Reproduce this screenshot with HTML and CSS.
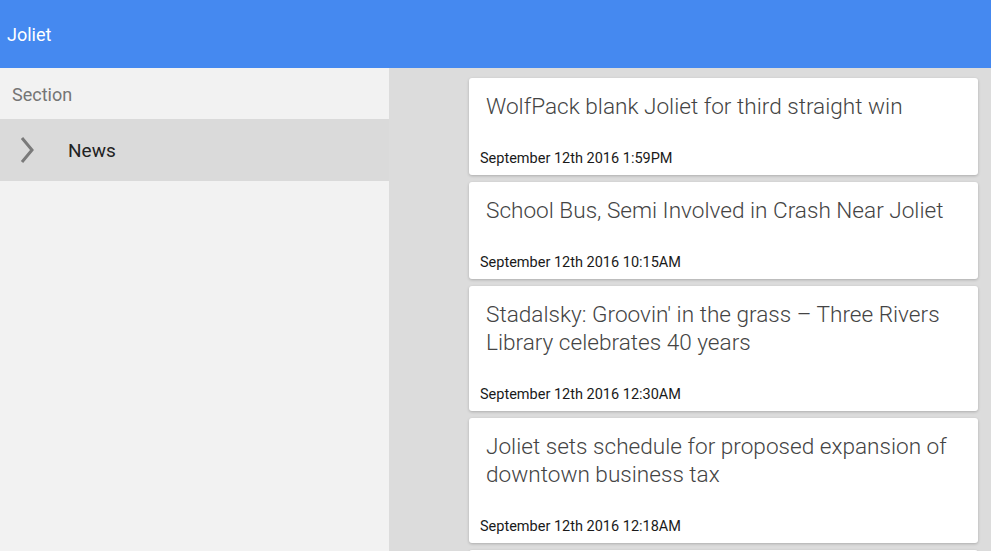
FILE: index.html
```html
<!DOCTYPE html>
<html>
<head>
<meta charset="utf-8">
<link rel="stylesheet" href="styles.css">
</head>
<body>
<header class="topbar"><span class="app-title">Joliet</span></header>
<div class="main">
  <aside class="sidebar">
    <div class="section-label">Section</div>
    <div class="nav-item">
      <svg class="chev" width="16" height="28" viewBox="0 0 16 28"><path d="M3 2 L13 14 L3 26" fill="none" stroke="#7a7a7a" stroke-width="3"/></svg>
      <span class="nav-text">News</span>
    </div>
  </aside>
  <section class="feed">
    <article class="card">
      <h2 class="card-title">WolfPack blank Joliet for third straight win</h2>
      <div class="card-date">September 12th 2016 1:59PM</div>
    </article>
    <article class="card">
      <h2 class="card-title">School Bus, Semi Involved in Crash Near Joliet</h2>
      <div class="card-date">September 12th 2016 10:15AM</div>
    </article>
    <article class="card">
      <h2 class="card-title">Stadalsky: Groovin' in the grass – Three Rivers Library celebrates 40 years</h2>
      <div class="card-date">September 12th 2016 12:30AM</div>
    </article>
    <article class="card">
      <h2 class="card-title">Joliet sets schedule for proposed expansion of downtown business tax</h2>
      <div class="card-date">September 12th 2016 12:18AM</div>
    </article>
    <article class="card card-empty"></article>
  </section>
</div>
</body>
</html>
```
FILE: styles.css
```css
html, body {
  margin: 0;
  padding: 0;
  height: 100%;
  overflow: hidden;
}
body {
  font-family: Roboto, "Liberation Sans", sans-serif;
  background: #dcdcdc;
}
.topbar {
  height: 68px;
  background: #4589f0;
  display: flex;
  align-items: center;
  padding-left: 7px;
}
.app-title {
  color: #fff;
  font-size: 18px;
}
.main {
  display: flex;
  height: calc(100% - 68px);
}
.sidebar {
  width: 389px;
  flex: none;
  background: #f2f2f2;
}
.section-label {
  height: 51px;
  display: flex;
  align-items: center;
  padding: 2px 0 0 12px;
  box-sizing: border-box;
  font-size: 18px;
  color: #757575;
}
.nav-item {
  height: 62px;
  background: #dadada;
  display: flex;
  align-items: center;
  padding-left: 19px;
}
.chev {
  flex: none;
}
.nav-text {
  margin-left: 33px;
  font-size: 19px;
  color: #222;
}
.feed {
  flex: 1;
  padding: 10px 13px 0 80px;
  display: flex;
  flex-direction: column;
  gap: 7px;
}
.card {
  background: #fff;
  border-radius: 3px;
  box-shadow: 0 1px 3px rgba(0,0,0,0.22);
  padding: 15px 11px 7px 11px;
  display: flex;
  flex-direction: column;
  flex: none;
}
.card-empty {
  height: 80px;
}
.card-title {
  margin: 0 0 29px 6px;
  font-weight: 300;
  font-size: 22.6px;
  line-height: 28px;
  color: #444;
}
.card-date {
  font-size: 14.5px;
  line-height: 18px;
  color: #1a1a1a;
}
```
